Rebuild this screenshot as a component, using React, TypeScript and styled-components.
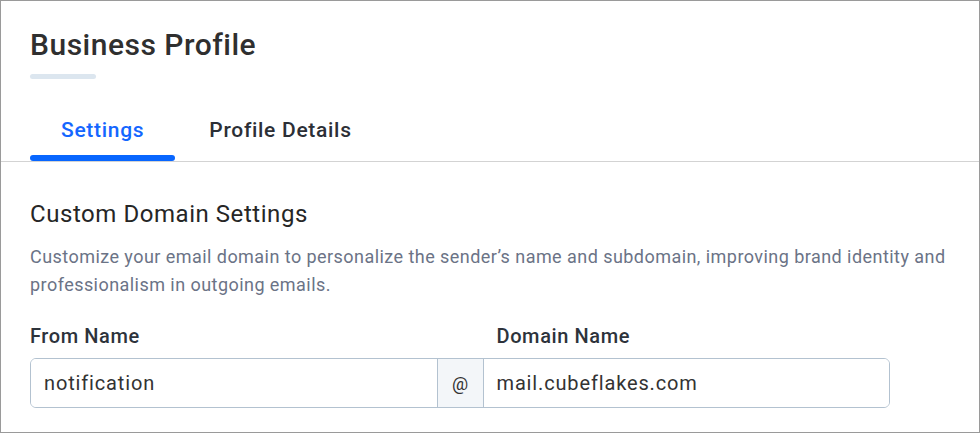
import React, { useState } from 'react';
import styled, { createGlobalStyle } from 'styled-components';

const GlobalStyle = createGlobalStyle`
  body {
    margin: 0;
    background: #fff;
    font-family: Roboto, 'Liberation Sans', Arial, sans-serif;
  }
  * {
    box-sizing: border-box;
  }
`;

const Frame = styled.div`
  width: 980px;
  height: 433px;
  border: 1px solid #9a9a9a;
  background: #fff;
  overflow: hidden;
`;

const Header = styled.header`
  padding: 26px 29px 0;
`;

const Title = styled.h1`
  margin: 0;
  font-size: 30px;
  line-height: 36px;
  font-weight: 500;
  letter-spacing: 0.5px;
  color: #2f2f2f;
`;

const TitleBar = styled.div`
  width: 66px;
  height: 5px;
  margin-top: 11px;
  border-radius: 3px;
  background: #dce6ef;
`;

const TabList = styled.nav`
  display: flex;
  gap: 3px;
  margin-top: 38px;
  padding-left: 29px;
  border-bottom: 1px solid #d3d3d3;
`;

const Tab = styled.button<{ active: boolean }>`
  display: flex;
  flex-direction: column;
  align-items: stretch;
  padding: 0;
  border: 0;
  background: none;
  cursor: pointer;
  font-family: inherit;
  font-size: 21px;
  line-height: 26px;
  font-weight: 500;
  letter-spacing: 0.7px;
  color: ${(p) => (p.active ? '#1466ff' : '#2c2f36')};
`;

const TabLabel = styled.span`
  padding: 0 31px;
`;

const Indicator = styled.span<{ active: boolean }>`
  height: 6px;
  margin-top: 12px;
  border-radius: 3px;
  background: ${(p) => (p.active ? '#0866ff' : 'transparent')};
`;

const Body = styled.section`
  padding: 37px 29px 0;
`;

const SectionTitle = styled.h2`
  margin: 0;
  font-size: 24px;
  line-height: 30px;
  font-weight: 400;
  letter-spacing: 0.55px;
  color: #262626;
`;

const Description = styled.p`
  margin: 14px 0 0;
  font-size: 18px;
  line-height: 28px;
  letter-spacing: 0.45px;
  color: #6b7386;
`;

const Form = styled.div`
  width: 860px;
  margin-top: 25px;
`;

const LabelRow = styled.div`
  display: grid;
  grid-template-columns: 1fr 47px 1fr;
  margin-bottom: 10px;
`;

const Label = styled.label<{ inset?: boolean }>`
  grid-column: ${(p) => (p.inset ? '3' : '1')};
  padding-left: ${(p) => (p.inset ? '13px' : '0')};
  font-size: 20px;
  line-height: 24px;
  font-weight: 500;
  letter-spacing: 0.6px;
  color: #2d333b;
`;

const InputGroup = styled.div`
  display: flex;
  height: 50px;
  border: 1px solid #b3c2d0;
  border-radius: 6px;
  overflow: hidden;
`;

const Field = styled.input`
  flex: 1;
  min-width: 0;
  border: 0;
  outline: none;
  padding: 0 13px;
  font-family: inherit;
  font-size: 20px;
  letter-spacing: 0.85px;
  color: #333;
  background: #fff;
`;

const Addon = styled.span`
  width: 47px;
  display: flex;
  align-items: center;
  justify-content: center;
  background: #f3f6f9;
  border-left: 1px solid #b3c2d0;
  border-right: 1px solid #b3c2d0;
  font-size: 18px;
  color: #333;
`;

const tabs = ['Settings', 'Profile Details'];

export default function App() {
  const [active, setActive] = useState(0);

  return (
    <>
      <GlobalStyle />
      <Frame>
        <Header>
          <Title>Business Profile</Title>
          <TitleBar />
        </Header>
        <TabList>
          {tabs.map((t, i) => (
            <Tab key={t} active={i === active} onClick={() => setActive(i)}>
              <TabLabel>{t}</TabLabel>
              <Indicator active={i === active} />
            </Tab>
          ))}
        </TabList>
        <Body>
          <SectionTitle>Custom Domain Settings</SectionTitle>
          <Description>
            Customize your email domain to personalize the sender’s name and subdomain, improving
            brand identity and professionalism in outgoing emails.
          </Description>
          <Form>
            <LabelRow>
              <Label htmlFor='from-name'>From Name</Label>
              <Label htmlFor='domain-name' inset>
                Domain Name
              </Label>
            </LabelRow>
            <InputGroup>
              <Field id='from-name' defaultValue='notification' />
              <Addon>@</Addon>
              <Field id='domain-name' defaultValue='mail.cubeflakes.com' />
            </InputGroup>
          </Form>
        </Body>
      </Frame>
    </>
  );
}
